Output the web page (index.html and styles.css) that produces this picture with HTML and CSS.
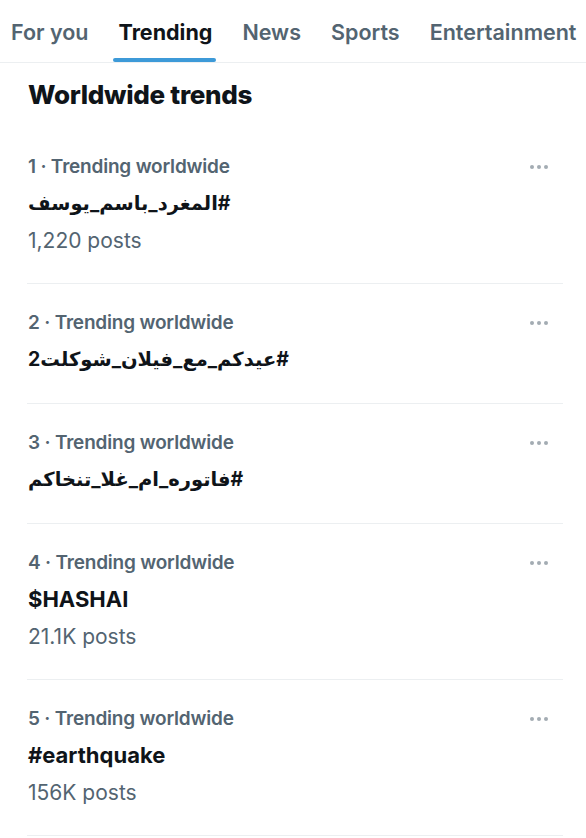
FILE: index.html
```html
<!DOCTYPE html>
<html lang="en">
<head>
<meta charset="utf-8">
<title>Trending</title>
<link rel="stylesheet" href="styles.css">
</head>
<body>
<nav class="tabs">
  <div class="tab">For you</div>
  <div class="tab active">Trending</div>
  <div class="tab">News</div>
  <div class="tab">Sports</div>
  <div class="tab">Entertainment</div>
</nav>
<h2 class="heading">Worldwide trends</h2>
<section class="list">
  <div class="trend">
    <div class="body">
      <div class="meta">1 · Trending worldwide</div>
      <div class="title ar" dir="auto">#المغرد_باسم_يوسف</div>
      <div class="posts">1,220 posts</div>
    </div>
    <div class="more"><svg viewBox="0 0 20 6" width="20" height="6"><circle cx="3" cy="3" r="2"/><circle cx="10" cy="3" r="2"/><circle cx="17" cy="3" r="2"/></svg></div>
  </div>
  <div class="trend short">
    <div class="body">
      <div class="meta">2 · Trending worldwide</div>
      <div class="title ar" dir="auto">#عيدكم_مع_فيلان_شوكلت2</div>
    </div>
    <div class="more"><svg viewBox="0 0 20 6" width="20" height="6"><circle cx="3" cy="3" r="2"/><circle cx="10" cy="3" r="2"/><circle cx="17" cy="3" r="2"/></svg></div>
  </div>
  <div class="trend short">
    <div class="body">
      <div class="meta">3 · Trending worldwide</div>
      <div class="title ar" dir="auto">#فاتوره_ام_غلا_تنخاكم</div>
    </div>
    <div class="more"><svg viewBox="0 0 20 6" width="20" height="6"><circle cx="3" cy="3" r="2"/><circle cx="10" cy="3" r="2"/><circle cx="17" cy="3" r="2"/></svg></div>
  </div>
  <div class="trend">
    <div class="body">
      <div class="meta">4 · Trending worldwide</div>
      <div class="title">$HASHAI</div>
      <div class="posts">21.1K posts</div>
    </div>
    <div class="more"><svg viewBox="0 0 20 6" width="20" height="6"><circle cx="3" cy="3" r="2"/><circle cx="10" cy="3" r="2"/><circle cx="17" cy="3" r="2"/></svg></div>
  </div>
  <div class="trend">
    <div class="body">
      <div class="meta">5 · Trending worldwide</div>
      <div class="title">#earthquake</div>
      <div class="posts">156K posts</div>
    </div>
    <div class="more"><svg viewBox="0 0 20 6" width="20" height="6"><circle cx="3" cy="3" r="2"/><circle cx="10" cy="3" r="2"/><circle cx="17" cy="3" r="2"/></svg></div>
  </div>
</section>
</body>
</html>
```
FILE: styles.css
```css
* { box-sizing: border-box; }
html, body { margin: 0; padding: 0; background: #fff; }
body {
  font-family: Inter, "DejaVu Sans", sans-serif;
  color: #0f1419;
  overflow: hidden;
}
.tabs {
  display: flex;
  height: 63px;
  padding-left: 11px;
  gap: 30px;
  border-bottom: 1px solid #eceff1;
  white-space: nowrap;
}
.tab {
  position: relative;
  display: flex;
  align-items: center;
  padding-top: 2px;
  font-size: 21.5px;
  font-weight: 600;
  color: #536471;
  letter-spacing: 0;
}
.tab.active {
  color: #0f1419;
  font-weight: 700;
}
.tab.active::after {
  content: "";
  position: absolute;
  left: -6px;
  right: -4px;
  bottom: 0;
  height: 4px;
  border-radius: 2px;
  background: #3d9ad8;
}
.heading {
  margin: 0;
  padding: 17px 28px 18px;
  font-size: 26px;
  line-height: 30px;
  font-weight: 800;
  letter-spacing: -0.3px;
}
.list {
  padding: 0 23px 0 27px;
}
.trend {
  display: flex;
  align-items: flex-start;
  padding: 20px 0 24px 1px;
  border-bottom: 1px solid #eceff1;
}
.trend.short {
  padding-bottom: 25px;
}
.body {
  flex: 1;
  display: flex;
  flex-direction: column;
}
.meta, .title, .posts {
  line-height: 37px;
  height: 37px;
}
.meta {
  font-size: 19px;
  font-weight: 600;
  color: #536471;
  letter-spacing: -0.2px;
}
.title {
  font-size: 22px;
  font-weight: 700;
  text-align: left;
}
.title.ar {
  font-size: 19.5px;
}
.posts {
  font-size: 21px;
  font-weight: 400;
  color: #536471;
}
.more {
  display: flex;
  align-items: center;
  height: 37px;
  margin-right: 14px;
  fill: #a3acb3;
}
```
